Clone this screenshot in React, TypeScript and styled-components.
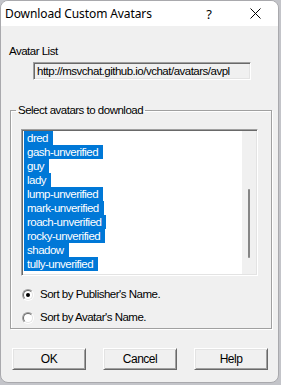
import styled, { createGlobalStyle } from "styled-components";

const avatars = [
  "dred",
  "gash-unverified",
  "guy",
  "lady",
  "lump-unverified",
  "mark-unverified",
  "roach-unverified",
  "rocky-unverified",
  "shadow",
  "tully-unverified",
];

const GlobalStyle = createGlobalStyle`
  html, body {
    margin: 0;
    padding: 0;
    background: #c3c4c9;
  }
  body {
    width: 281px;
    height: 385px;
    overflow: hidden;
  }
`;

const Window = styled.div`
  width: 279px;
  height: 383px;
  box-sizing: border-box;
  border: 1px solid #a9a9ad;
  border-radius: 8px;
  overflow: hidden;
  display: flex;
  flex-direction: column;
  background: #f0f0f0;
  font-family: "Liberation Sans", Arial, sans-serif;
  font-size: 11.5px;
  letter-spacing: -0.5px;
  color: #000;
`;

const TitleBar = styled.div`
  height: 25px;
  flex: none;
  display: flex;
  align-items: center;
  background: #fff;
`;

const Title = styled.div`
  flex: 1;
  padding-left: 4px;
  font-family: "Noto Sans", "Segoe UI", sans-serif;
  font-size: 12px;
  letter-spacing: -0.1px;
  line-height: 16px;
`;

const CaptionButton = styled.div`
  width: 46px;
  height: 25px;
  display: flex;
  align-items: center;
  justify-content: center;
  font-family: "Noto Sans", "Segoe UI", sans-serif;
  font-size: 13px;
  letter-spacing: 0;
`;

const Body = styled.div`
  flex: 1;
  padding: 19px 0 0 8px;
  display: flex;
  flex-direction: column;
`;

const Label = styled.div`
  line-height: 13px;
`;

const UrlBox = styled.div`
  margin: 4px 0 0 24px;
  width: 218px;
  height: 18px;
  box-sizing: border-box;
  border: 1px solid;
  border-color: #a0a0a0 #fff #fff #a0a0a0;
  box-shadow: inset 1px 1px 0 #696969, inset -1px -1px 0 #e3e3e3;
  padding: 2px 2px 0 3px;
  line-height: 13px;
  white-space: nowrap;
  overflow: hidden;
  background: #f0f0f0;
`;

const Group = styled.fieldset`
  margin: 24px 0 0 1px;
  width: 262px;
  box-sizing: border-box;
  padding: 0 0 4px 0;
  border: 1px solid #a0a0a0;
  box-shadow: inset 1px 1px 0 #fff, 1px 1px 0 #fff;
  min-width: 0;
`;

const Legend = styled.legend`
  margin-left: 5px;
  padding: 0 2px;
  line-height: 13px;
`;

const ListBox = styled.div`
  margin: 12px 0 0 10px;
  width: 237px;
  height: 147px;
  box-sizing: border-box;
  border: 1px solid;
  border-color: #a0a0a0 #fff #fff #a0a0a0;
  box-shadow: inset 1px 1px 0 #696969, inset -1px -1px 0 #e3e3e3;
  padding: 1px;
  display: flex;
  background: #fff;
`;

const Items = styled.div`
  flex: 1;
  padding-left: 1px;
  display: flex;
  flex-direction: column;
  align-items: flex-start;
`;

const Item = styled.div<{ $selected?: boolean }>`
  height: 14px;
  line-height: 14px;
  padding: 0 5px 0 3px;
  background: ${(p) => (p.$selected ? "#0078d7" : "transparent")};
  color: ${(p) => (p.$selected ? "#fff" : "#000")};
  white-space: nowrap;
`;

const ScrollTrack = styled.div`
  width: 14px;
  background: #f0f0f0;
  display: flex;
  justify-content: center;
`;

const ScrollThumb = styled.div<{ $top: number; $size: number }>`
  width: 2px;
  margin-top: ${(p) => p.$top}px;
  height: ${(p) => p.$size}px;
  background: #858585;
  border-radius: 1px;
`;

const Options = styled.div`
  margin: 12px 0 0 11px;
  display: flex;
  flex-direction: column;
  gap: 10px;
`;

const RadioRow = styled.label`
  display: flex;
  align-items: center;
  gap: 6px;
  height: 13px;
  line-height: 13px;
`;

const RadioOuter = styled.span`
  width: 12px;
  height: 12px;
  box-sizing: border-box;
  border-radius: 50%;
  border: 1px solid;
  border-color: #a0a0a0 #fff #fff #a0a0a0;
  display: flex;
`;

const RadioInner = styled.span`
  flex: 1;
  border-radius: 50%;
  border: 1px solid;
  border-color: #696969 #e3e3e3 #e3e3e3 #696969;
  background: #fff;
  display: flex;
  align-items: center;
  justify-content: center;
`;

const RadioDot = styled.span<{ $on?: boolean }>`
  width: 4px;
  height: 4px;
  border-radius: 50%;
  background: ${(p) => (p.$on ? "#000" : "transparent")};
`;

const ButtonRow = styled.div`
  margin: 19px 0 0 3px;
  display: flex;
  gap: 17px;
`;

const Button = styled.div`
  width: 74px;
  height: 22px;
  box-sizing: border-box;
  border: 1px solid;
  border-color: #fff #696969 #696969 #fff;
  box-shadow: inset 1px 1px 0 #e3e3e3, inset -1px -1px 0 #a0a0a0;
  background: #f0f0f0;
  display: flex;
  align-items: center;
  justify-content: center;
  font-size: 12px;
`;

const CloseIcon = () => (
  <svg width="11" height="11" viewBox="0 0 11 11">
    <path d="M0.5 0.5 L10.5 10.5 M10.5 0.5 L0.5 10.5" stroke="#000" strokeWidth="1" fill="none" />
  </svg>
);

const Radio = ({ on, text }: { on?: boolean; text: string }) => (
  <RadioRow>
    <RadioOuter>
      <RadioInner>
        <RadioDot $on={on} />
      </RadioInner>
    </RadioOuter>
    {text}
  </RadioRow>
);

const App = () => {
  return (
    <>
      <GlobalStyle />
      <Window>
        <TitleBar>
          <Title>Download Custom Avatars</Title>
          <CaptionButton>?</CaptionButton>
          <CaptionButton>
            <CloseIcon />
          </CaptionButton>
        </TitleBar>
        <Body>
          <Label>Avatar List</Label>
          <UrlBox>http://msvchat.github.io/vchat/avatars/avpl</UrlBox>
          <Group>
            <Legend>Select avatars to download</Legend>
            <ListBox>
              <Items>
                {avatars.map((name) => (
                  <Item key={name} $selected>
                    {name}
                  </Item>
                ))}
              </Items>
              <ScrollTrack>
                <ScrollThumb $top={58} $size={69} />
              </ScrollTrack>
            </ListBox>
            <Options>
              <Radio on text="Sort by Publisher's Name." />
              <Radio text="Sort by Avatar's Name." />
            </Options>
          </Group>
          <ButtonRow>
            <Button>OK</Button>
            <Button>Cancel</Button>
            <Button>Help</Button>
          </ButtonRow>
        </Body>
      </Window>
    </>
  );
};

export default App;
